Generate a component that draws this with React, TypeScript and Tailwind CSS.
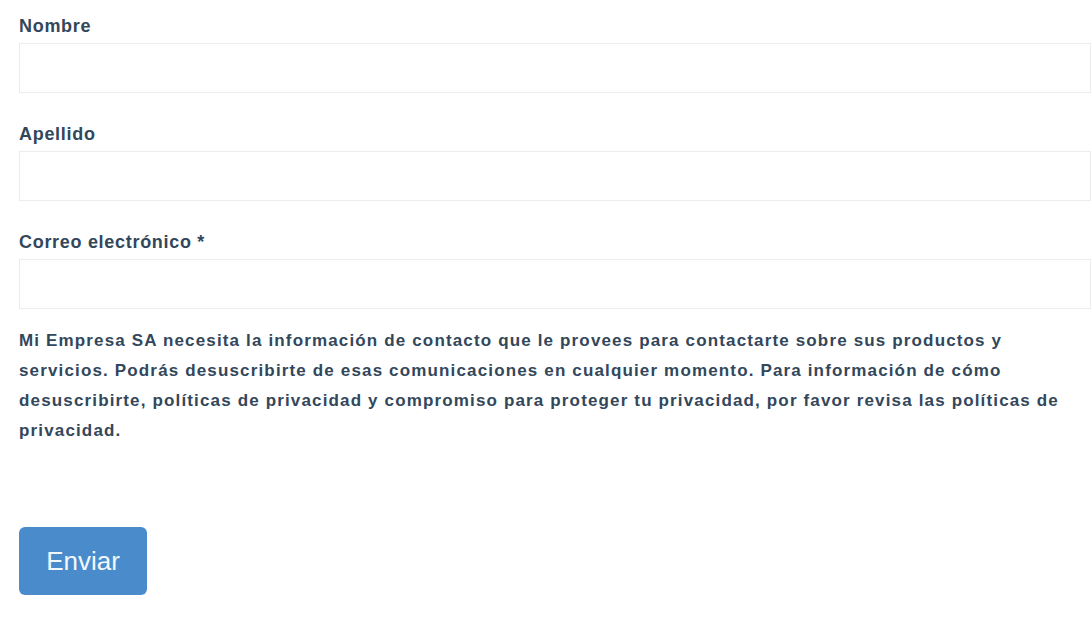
export default function App() {
  const fields = [
    { label: "Nombre", type: "text" },
    { label: "Apellido", type: "text" },
    { label: "Correo electrónico *", type: "email" },
  ];

  return (
    <div
      className="w-[1092px] h-[628px] bg-white text-[#33475b] overflow-hidden"
      style={{ fontFamily: '"Liberation Sans", Arial, Helvetica, sans-serif' }}
    >
      <form className="pl-[19px] pr-px pt-[16px] flex flex-col">
        {fields.map((f, i) => (
          <div key={f.label} className={i > 0 ? "mt-[31px]" : ""}>
            <label className="block text-[18px] font-bold leading-[20px] tracking-[0.7px] mb-[7px]">{f.label}</label>
            <input
              type={f.type}
              className="block w-full h-[50px] border border-[#e9edf0] bg-white outline-none px-3"
            />
          </div>
        ))}

        <p className="mt-[17px] text-[17px] font-bold leading-[30px] tracking-[1.15px] whitespace-nowrap">
          Mi Empresa SA necesita la información de contacto que le provees para contactarte sobre sus productos y
          <br />
          servicios. Podrás desuscribirte de esas comunicaciones en cualquier momento. Para información de cómo
          <br />
          desuscribirte, políticas de privacidad y compromiso para proteger tu privacidad, por favor revisa las políticas de
          <br />
          privacidad.
        </p>

        <div className="mt-[81px]">
          <button
            type="submit"
            className="w-[128px] h-[68px] rounded-[6px] bg-[#4a8ccb] text-[#f2f7fc] text-[26px] leading-none"
          >
            Enviar
          </button>
        </div>
      </form>
    </div>
  );
}
